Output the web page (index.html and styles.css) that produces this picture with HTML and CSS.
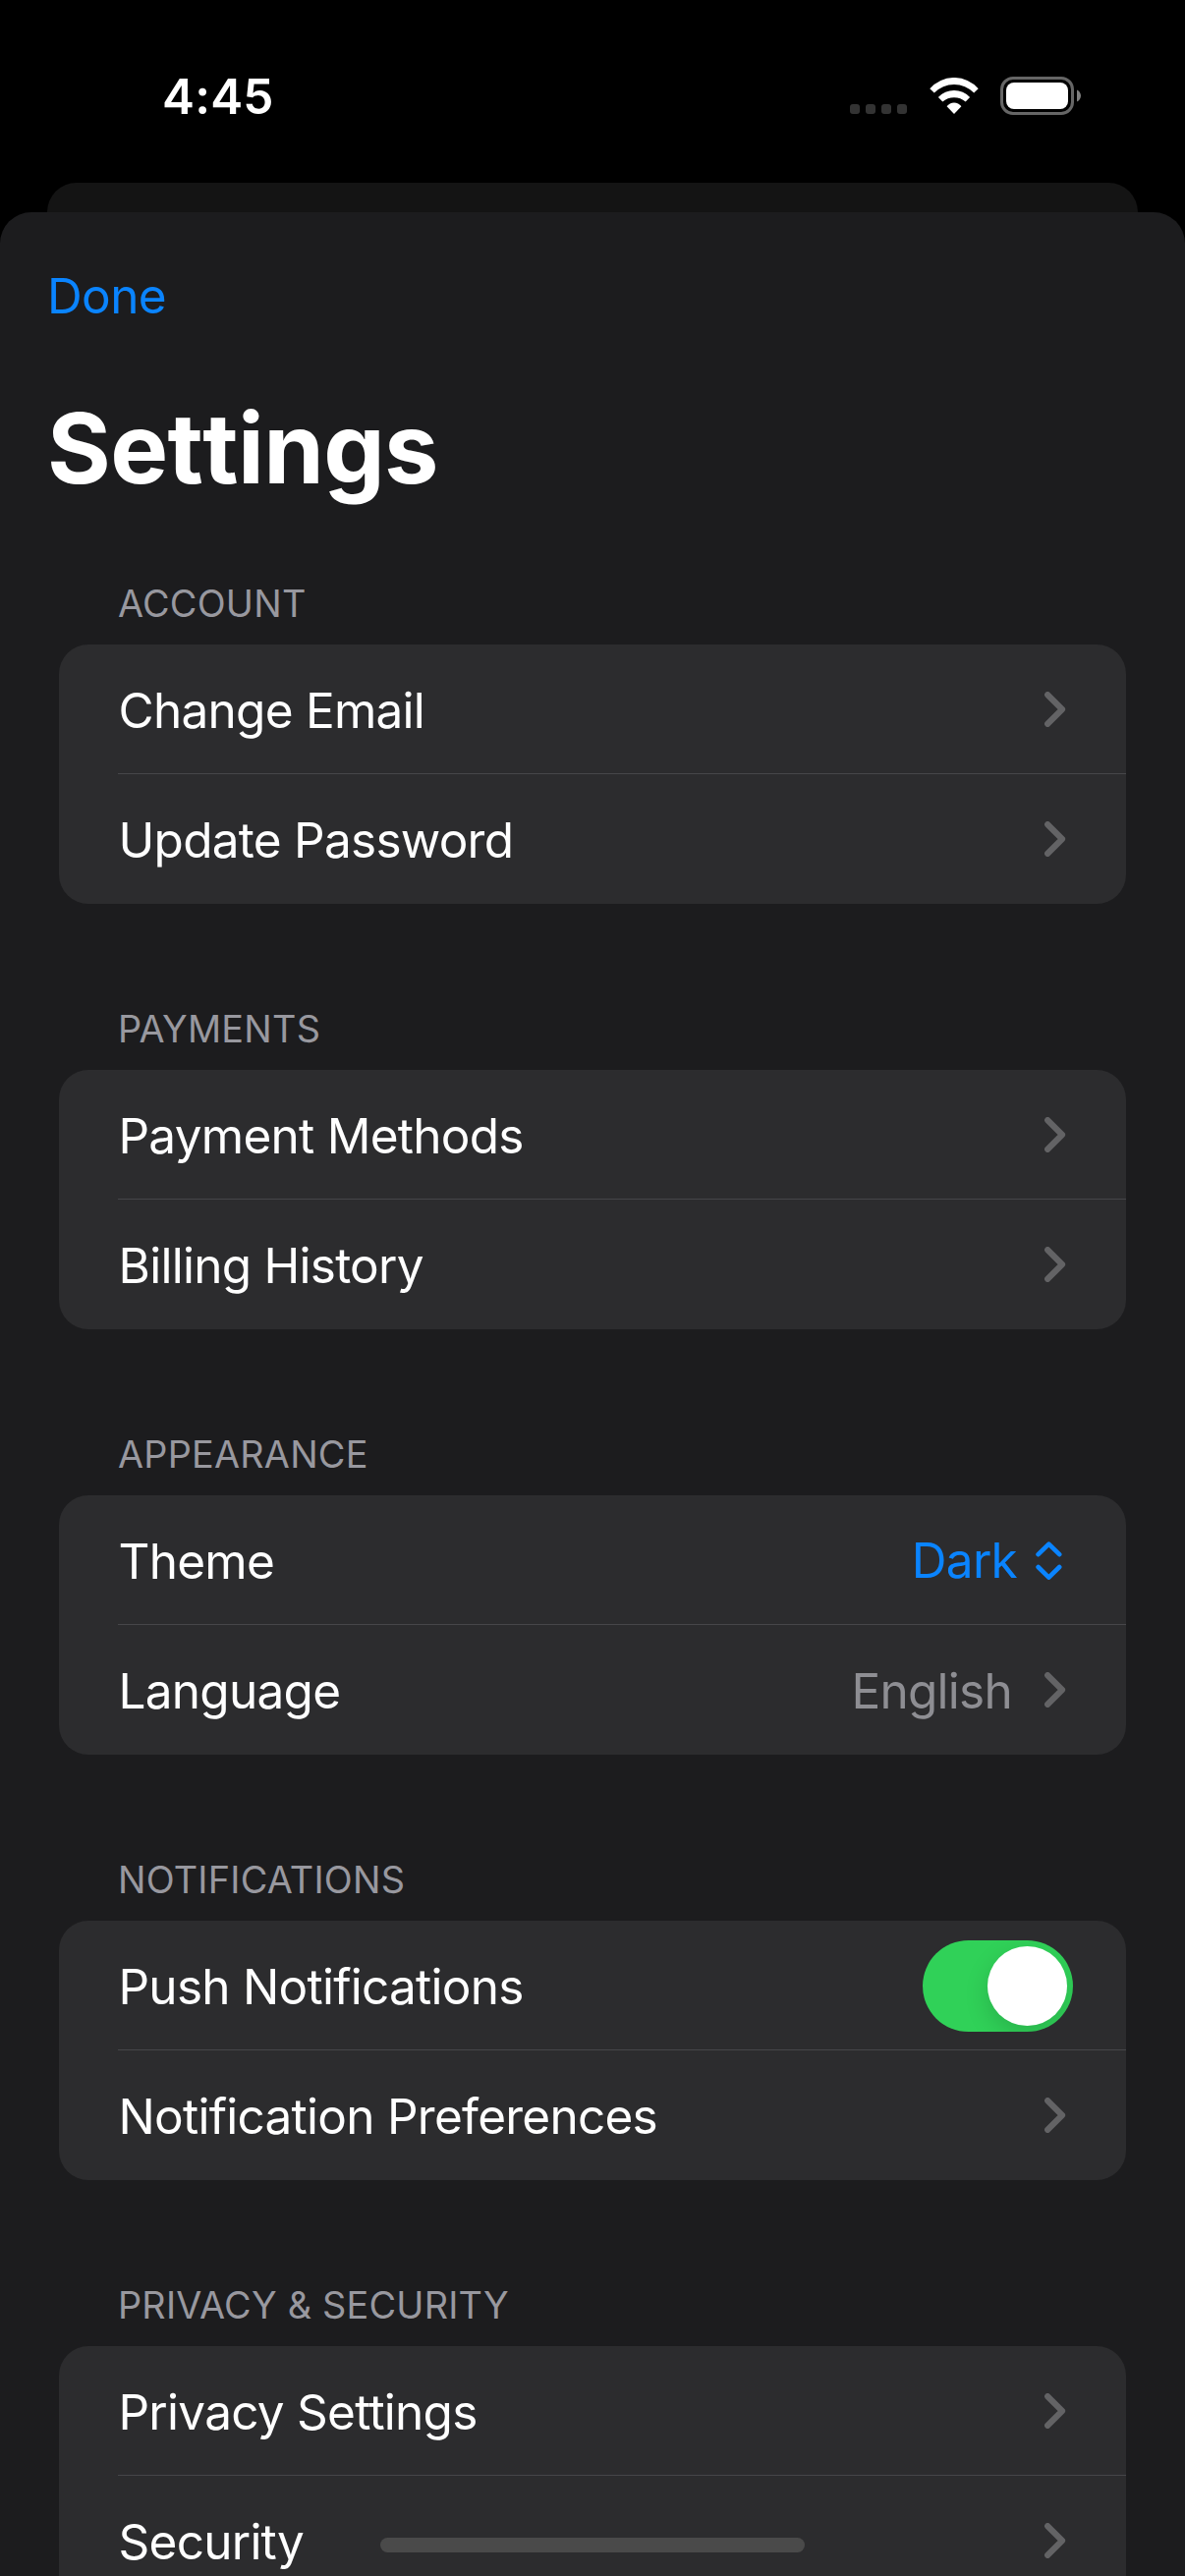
FILE: index.html
```html
<!DOCTYPE html>
<html lang="en">
<head>
<meta charset="utf-8">
<title>Settings</title>
<link rel="stylesheet" href="styles.css">
</head>
<body>
<svg class="defs" aria-hidden="true">
  <symbol id="chevron" viewBox="0 0 22 36"><path d="M3.2 3.2 18 18 3.2 32.8" fill="none" stroke="currentColor" stroke-width="6.2" stroke-linecap="round" stroke-linejoin="round"/></symbol>
</svg>
<div class="screen">
  <header class="status-bar">
    <span class="time">4:45</span>
    <div class="indicators">
      <div class="cellular"><i></i><i></i><i></i><i></i></div>
      <svg class="wifi" viewBox="0 0 50 37">
        <path d="M0.3 11.2A32.8 32.8 0 0 1 49.7 11.2L45.2 15.6A28 28 0 0 0 4.8 15.6Z"/>
        <path d="M8.9 19.9A22 22 0 0 1 41.1 19.9L36.7 24.5A18 18 0 0 0 13.3 24.5Z"/>
        <path d="M17.6 29.2A9.4 9.4 0 0 1 32.4 29.2L25 36.9Z"/>
      </svg>
      <svg class="battery" viewBox="0 0 82 39">
        <rect x="1.5" y="1.5" width="72" height="36" rx="11.5" fill="none" stroke="#666" stroke-width="3"/>
        <rect x="6" y="6" width="63" height="27" rx="8" fill="#fff"/>
        <path d="M78 13.5C80.5 14.5 82 17 82 19.5C82 22 80.5 24.5 78 25.5Z" fill="#808080"/>
      </svg>
    </div>
  </header>
  <div class="back-card"></div>
  <main class="sheet">
    <nav class="nav"><a class="done">Done</a></nav>
    <h1 class="title">Settings</h1>

    <section class="section">
      <h2 class="section-title">ACCOUNT</h2>
      <div class="group">
        <div class="row"><span class="label">Change Email</span><svg class="chevron"><use href="#chevron"/></svg></div>
        <div class="row"><span class="label">Update Password</span><svg class="chevron"><use href="#chevron"/></svg></div>
      </div>
    </section>

    <section class="section">
      <h2 class="section-title">PAYMENTS</h2>
      <div class="group">
        <div class="row"><span class="label">Payment Methods</span><svg class="chevron"><use href="#chevron"/></svg></div>
        <div class="row"><span class="label">Billing History</span><svg class="chevron"><use href="#chevron"/></svg></div>
      </div>
    </section>

    <section class="section">
      <h2 class="section-title">APPEARANCE</h2>
      <div class="group">
        <div class="row">
          <span class="label">Theme</span>
          <span class="picker">Dark</span>
          <svg class="updown" viewBox="0 0 27 39"><path d="M2.6 13.2 13.4 2.6 24.2 13.2M2.6 26 13.4 36.6 24.2 26" fill="none" stroke="currentColor" stroke-width="4.6" stroke-linecap="round" stroke-linejoin="round"/></svg>
        </div>
        <div class="row"><span class="label">Language</span><span class="value">English</span><svg class="chevron"><use href="#chevron"/></svg></div>
      </div>
    </section>

    <section class="section">
      <h2 class="section-title">NOTIFICATIONS</h2>
      <div class="group">
        <div class="row"><span class="label">Push Notifications</span><span class="toggle"><span class="knob"></span></span></div>
        <div class="row"><span class="label">Notification Preferences</span><svg class="chevron"><use href="#chevron"/></svg></div>
      </div>
    </section>

    <section class="section">
      <h2 class="section-title">PRIVACY &amp; SECURITY</h2>
      <div class="group">
        <div class="row"><span class="label">Privacy Settings</span><svg class="chevron"><use href="#chevron"/></svg></div>
        <div class="row"><span class="label">Security</span><svg class="chevron"><use href="#chevron"/></svg></div>
        <div class="row"></div>
      </div>
    </section>
  </main>
  <div class="home-indicator"></div>
</div>
</body>
</html>
```
FILE: styles.css
```css
* { box-sizing: border-box; }

body {
  margin: 0;
  background: #000;
  font-family: Inter, "Liberation Sans", sans-serif;
  color: #fff;
}

.defs { display: none; }

.screen {
  position: relative;
  display: flex;
  flex-direction: column;
  width: 1206px;
  height: 2622px;
  overflow: hidden;
}

.status-bar {
  display: flex;
  justify-content: space-between;
  flex: none;
  height: 186px;
  padding: 68px 106px 0 165px;
}

.time {
  font-size: 49.5px;
  font-weight: 600;
  line-height: 60px;
  letter-spacing: 0.2px;
}

.indicators { display: flex; padding-top: 10px; }

.cellular { display: flex; gap: 6px; padding-top: 28px; }
.cellular i { width: 10px; height: 10px; border-radius: 3px; background: #333; }

.wifi { width: 50px; height: 37px; margin: 1px 22.5px 0; fill: #fff; }
.battery { width: 82px; height: 39px; }

.back-card {
  flex: none;
  height: 30px;
  margin: 0 48px;
  border-radius: 30px 30px 0 0;
  background: #141414;
}

.sheet {
  flex: none;
  height: 2406px;
  overflow: hidden;
  border-radius: 32px 32px 0 0;
  background: #1c1c1e;
}

.nav { padding: 55px 48px 0; }

.done {
  display: block;
  font-size: 49.5px;
  line-height: 60px;
  letter-spacing: -0.6px;
  color: #0a84ff;
}

.title {
  margin: 65px 48px 0;
  font-size: 99px;
  font-weight: 700;
  line-height: 120px;
  font-kerning: none;
  letter-spacing: -0.6px;
}

.section { margin-bottom: 104px; }
.title + .section { margin-top: 75px; }

.section-title {
  margin: 0 0 19px;
  padding-left: 120px;
  font-size: 37.8px;
  font-weight: 400;
  line-height: 46px;
  letter-spacing: 0.23px;
  color: #98989f;
}

.group {
  margin: 0 60px;
  overflow: hidden;
  border-radius: 30px;
  background: #2c2c2e;
}

.row {
  position: relative;
  display: flex;
  align-items: center;
  height: 132px;
  padding-left: 60.5px;
}

.row + .row::before {
  content: "";
  position: absolute;
  top: -1px;
  left: 60px;
  right: 0;
  height: 1px;
  background: #464649;
}

.label,
.value,
.picker {
  font-size: 49.5px;
  line-height: 60px;
  letter-spacing: -0.74px;
}

.label { flex: 1; padding-top: 2px; }
.picker { color: #0a84ff; }
.value { padding-top: 2px; color: #8e8e93; }

.chevron { width: 22px; height: 36px; margin: 0 61px 0 33px; color: #636365; }
.updown { width: 27px; height: 39px; margin: 0 65px 0 19px; color: #0a84ff; }

.toggle {
  display: flex;
  justify-content: flex-end;
  width: 153px;
  height: 93px;
  margin-right: 54px;
  padding: 6px;
  overflow: hidden;
  border-radius: 47px;
  background: #30d158;
}

.knob {
  width: 81px;
  height: 81px;
  border-radius: 50%;
  background: #fff;
  box-shadow: 0 9px 24px rgba(0, 0, 0, 0.15);
}

.home-indicator {
  position: absolute;
  left: 387px;
  bottom: 24px;
  width: 432px;
  height: 15px;
  border-radius: 8px;
  background: #4a4a4a;
}
```
